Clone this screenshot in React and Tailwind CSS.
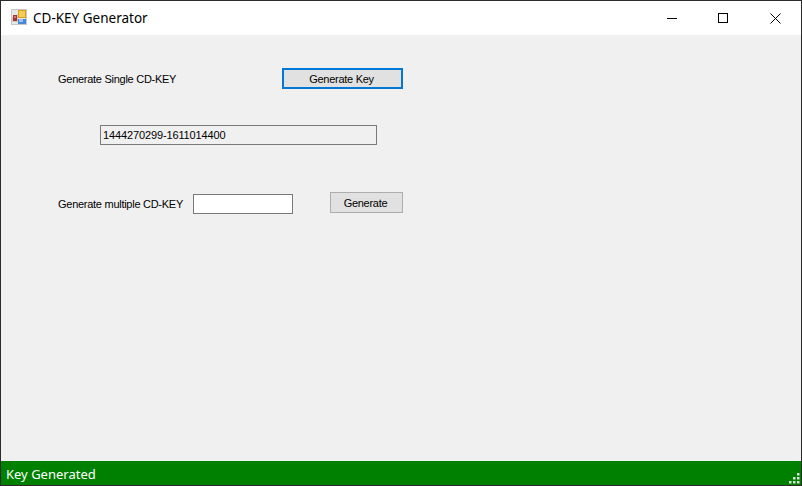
const uiFont = { fontFamily: '"Liberation Sans", Arial, sans-serif' };

function AppIcon() {
  return (
    <svg width="16" height="16" viewBox="0 0 16 16" className="mb-[2px] shrink-0">
      <rect x="0" y="0" width="16" height="16" fill="#dcdcdc" />
      <rect x="0.5" y="0.5" width="15" height="15" fill="#e6e6e6" stroke="#c8c8c8" />
      <rect x="1" y="5" width="6" height="8" fill="#c9c9c9" />
      <rect x="1" y="5" width="5" height="3" fill="#efefef" />
      <rect x="2" y="6" width="4" height="6" fill="#a8322c" />
      <rect x="3" y="7" width="2" height="2" fill="#d8746c" />
      <rect x="7" y="1" width="8" height="8" fill="#d9a020" />
      <rect x="8" y="2" width="6" height="6" fill="#f5cc55" />
      <rect x="7" y="10" width="8" height="5" fill="#4a86d8" />
      <rect x="8" y="10" width="4" height="3" fill="#9cc4f2" />
    </svg>
  );
}

function WindowControls() {
  return (
    <div className="flex h-full">
      <button className="flex h-full w-[51px] items-center justify-center">
        <svg width="10" height="10" viewBox="0 0 10 10"><path d="M0 5.5H10" stroke="#000" strokeWidth="1" /></svg>
      </button>
      <button className="flex h-full w-[52px] items-center justify-center">
        <svg width="10" height="10" viewBox="0 0 10 10"><rect x="0.5" y="0.5" width="9" height="9" fill="none" stroke="#000" /></svg>
      </button>
      <button className="flex h-full w-[52px] items-center justify-center">
        <svg width="11" height="11" viewBox="0 0 11 11"><path d="M0.5 0.5L10.5 10.5M10.5 0.5L0.5 10.5" stroke="#000" strokeWidth="1" fill="none" /></svg>
      </button>
    </div>
  );
}

function Grip() {
  const dots = [[8, 0], [4, 4], [8, 4], [0, 8], [4, 8], [8, 8]];
  return (
    <svg width="11" height="11" viewBox="0 0 11 11" className="absolute bottom-[1px] right-[1px]">
      {dots.map(([x, y]) => (
        <rect key={`${x}-${y}`} x={x} y={y} width="2.5" height="2.5" fill="#d8e4d8" />
      ))}
    </svg>
  );
}

export default function App() {
  return (
    <div className="flex h-[486px] w-[802px] flex-col overflow-hidden border border-[#2b2b2b] bg-[#f0f0f0] text-black" style={uiFont}>
      <header className="flex h-[34px] shrink-0 items-center justify-between bg-white">
        <div className="flex items-center pl-[10px]">
          <AppIcon />
          <span className="ml-[6px] pt-[1px] text-[13.5px] leading-none" style={{ fontFamily: '"Noto Sans", sans-serif' }}>CD-KEY Generator</span>
        </div>
        <WindowControls />
      </header>

      <main className="flex flex-1 flex-col pl-[57px] pt-[33px] text-[11px] tracking-[-0.27px]">
        <div className="flex h-[21px] items-center">
          <span className="w-[224px] pt-[2px] leading-none">Generate Single CD-KEY</span>
          <button className="h-[21px] w-[121px] border-2 border-[#0078d7] bg-[#e1e1e1] pr-[2px] pt-[1px] leading-none">Generate Key</button>
        </div>

        <div className="ml-[42px] mt-[36px] flex h-[20px] w-[277px] items-center border border-[#7a7a7a] bg-[#f0f0f0] pl-[2px] leading-none tracking-[-0.13px]">
          1444270299-1611014400
        </div>

        <div className="mt-[47px] flex items-start">
          <span className="mt-[7px] w-[135px] leading-none whitespace-nowrap">Generate multiple CD-KEY</span>
          <div className="mt-[2px] h-[20px] w-[100px] border border-[#7a7a7a] bg-white" />
          <button className="ml-[37px] h-[21px] w-[73px] border border-[#adadad] bg-[#e1e1e1] pr-[2px] pt-[1px] leading-none">Generate</button>
        </div>
      </main>

      <footer className="relative flex h-[24px] shrink-0 items-center bg-[#008000] pl-[5px] pt-[2px] text-[13px] leading-none text-white" style={{ fontFamily: '"Noto Sans", sans-serif' }}>
        Key Generated
        <Grip />
      </footer>
    </div>
  );
}
